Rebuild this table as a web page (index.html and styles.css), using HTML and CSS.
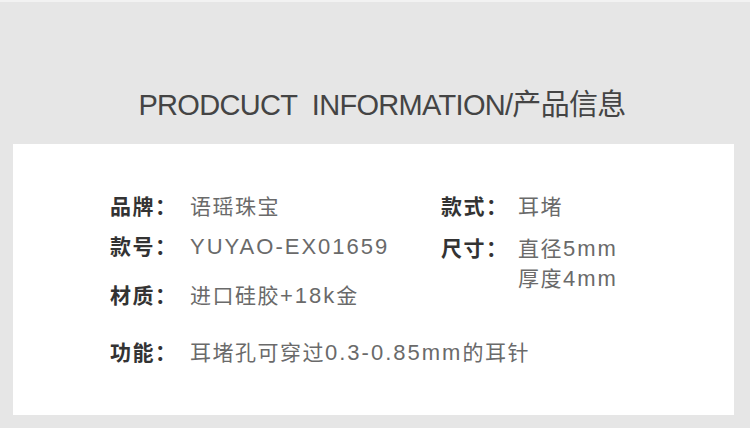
FILE: index.html
```html
<!DOCTYPE html>
<html lang="zh-CN">
<head>
    <meta charset="UTF-8">
    <title>产品信息</title>
    <link rel="stylesheet" href="styles.css">
</head>
<body>
    <div class="page">
        <h1 class="title">PRODCUCT&nbsp; INFORMATION/产品信息</h1>
        <div class="card">
            <div class="cols">
                <div class="col col-left">
                    <div class="row r1"><span class="label">品牌：</span><span class="value">语瑶珠宝</span></div>
                    <div class="row r2"><span class="label">款号：</span><span class="value"><span class="en">YUYAO-EX01659</span></span></div>
                    <div class="row r3"><span class="label">材质：</span><span class="value">进口硅胶<span class="en">+18k</span>金</span></div>
                </div>
                <div class="col col-right">
                    <div class="row r1"><span class="label">款式：</span><span class="value">耳堵</span></div>
                    <div class="row r2b"><span class="label">尺寸：</span><span class="value">直径<span class="en">5mm</span><br>厚度<span class="en">4mm</span></span></div>
                </div>
            </div>
            <div class="row r4"><span class="label">功能：</span><span class="value">耳堵孔可穿过<span class="en">0.3-0.85mm</span>的耳针</span></div>
        </div>
    </div>
</body>
</html>
```

FILE: styles.css
```css
body {
    margin: 0;
    background-color: #e6e6e6;
    font-family: "Noto Sans CJK SC", "Noto Sans", sans-serif;
}
.page {
    width: 750px;
    height: 428px;
    border-top: 2px solid #f2f2f2;
    box-sizing: border-box;
}
.title {
    margin: 0;
    height: 142px;
    padding-top: 83px;
    padding-left: 14px;
    box-sizing: border-box;
    text-align: center;
    font-family: "Liberation Sans", "Noto Sans CJK SC", sans-serif;
    font-weight: normal;
    font-size: 29px;
    letter-spacing: -0.7px;
    line-height: 40px;
    color: #444444;
}
.card {
    margin-left: 13px;
    width: 721px;
    height: 271px;
    background-color: #ffffff;
    padding: 46px 0 0 97px;
    box-sizing: border-box;
}
.cols {
    display: flex;
}
.col-left {
    width: 331px;
}
.row {
    display: flex;
    font-size: 21px;
    line-height: 30px;
    letter-spacing: 1.5px;
}
.label {
    width: 80px;
    flex-shrink: 0;
    font-weight: bold;
    color: #333333;
}
.col-right .label {
    width: 77px;
}
.value {
    color: #6a6a6a;
}
.en {
    font-family: "Liberation Sans", sans-serif;
    font-size: 22px;
    letter-spacing: 2px;
}
.r2 {
    margin-top: 10px;
}
.r3 {
    margin-top: 17px;
}
.r2b {
    margin-top: 13px;
    line-height: 29px;
}
.r4 {
    margin-top: 25px;
}
```
